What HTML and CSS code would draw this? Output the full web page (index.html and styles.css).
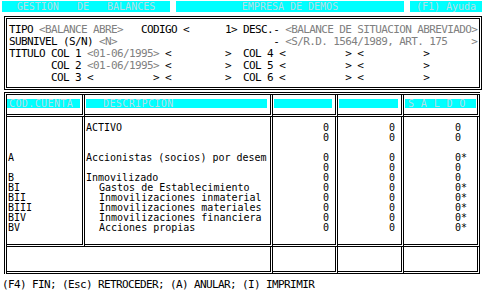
FILE: index.html
```
<!DOCTYPE html>
<html lang="es">
<head>
    <meta charset="UTF-8">
    <title>Gestion de Balances</title>
    <link rel="stylesheet" href="styles.css">
</head>
<body>
    <div class="topbar">
        <div class="tab tab-app">GESTION   DE   BALANCES</div>
        <div class="tab tab-emp">EMPRESA DE DEMOS</div>
        <div class="tab tab-help">(F1) Ayuda</div>
    </div>

    <div class="panel">
        <div class="line">TIPO <span class="fld">&lt;BALANCE ABRE&gt;</span>   CODIGO &lt;      1&gt; DESC.- <span class="fld">&lt;BALANCE DE SITUACION ABREVIADO&gt;</span></div>
        <div class="line">SUBNIVEL (S/N) <span class="fld">&lt;N&gt;</span>                          - <span class="fld">&lt;S/R.D. 1564/1989, ART. 175    &gt;</span></div>
        <div class="line">TITULO COL 1 <span class="fld">&lt;01-06/1995&gt;</span> &lt;         &gt;  COL 4 &lt;          &gt; &lt;          &gt;</div>
        <div class="line">       COL 2 <span class="fld">&lt;01-06/1995&gt;</span> &lt;         &gt;  COL 5 &lt;          &gt; &lt;          &gt;</div>
        <div class="line">       COL 3 &lt;          &gt; &lt;         &gt;  COL 6 &lt;          &gt; &lt;          &gt;</div>
    </div>

    <div class="grid">
        <div class="head"><div class="bar bar-cod">COD.CUENTA</div></div>
        <div class="head"><div class="bar bar-desc">DESCRIPCION</div></div>
        <div class="head"><div class="bar"></div></div>
        <div class="head"><div class="bar"></div></div>
        <div class="head"><div class="bar bar-saldo">S A L D O</div></div>

        <div class="body cod">
            <div class="row"></div>
            <div class="row"></div>
            <div class="row"></div>
            <div class="row">A</div>
            <div class="row"></div>
            <div class="row">B</div>
            <div class="row">BI</div>
            <div class="row">BII</div>
            <div class="row">BIII</div>
            <div class="row">BIV</div>
            <div class="row">BV</div>
        </div>
        <div class="body desc">
            <div class="row">ACTIVO</div>
            <div class="row"></div>
            <div class="row"></div>
            <div class="row">Accionistas (socios) por desem</div>
            <div class="row"></div>
            <div class="row">Inmovilizado</div>
            <div class="row sub">Gastos de Establecimiento</div>
            <div class="row sub">Inmovilizaciones inmaterial</div>
            <div class="row sub">Inmovilizaciones materiales</div>
            <div class="row sub">Inmovilizaciones financiera</div>
            <div class="row sub">Acciones propias</div>
        </div>
        <div class="body num">
            <div class="row">0</div>
            <div class="row">0</div>
            <div class="row"></div>
            <div class="row">0</div>
            <div class="row">0</div>
            <div class="row">0</div>
            <div class="row">0</div>
            <div class="row">0</div>
            <div class="row">0</div>
            <div class="row">0</div>
            <div class="row">0</div>
        </div>
        <div class="body num">
            <div class="row">0</div>
            <div class="row">0</div>
            <div class="row"></div>
            <div class="row">0</div>
            <div class="row">0</div>
            <div class="row">0</div>
            <div class="row">0</div>
            <div class="row">0</div>
            <div class="row">0</div>
            <div class="row">0</div>
            <div class="row">0</div>
        </div>
        <div class="body num saldo">
            <div class="row">0 </div>
            <div class="row">0 </div>
            <div class="row"></div>
            <div class="row">0*</div>
            <div class="row">0 </div>
            <div class="row">0 </div>
            <div class="row">0*</div>
            <div class="row">0*</div>
            <div class="row">0*</div>
            <div class="row">0*</div>
            <div class="row">0*</div>
        </div>

        <div class="total total-label"></div>
        <div class="total"></div>
        <div class="total"></div>
        <div class="total"></div>
    </div>

    <div class="keys">(F4) FIN; (Esc) RETROCEDER; (A) ANULAR; (I) IMPRIMIR</div>
</body>
</html>
```

FILE: styles.css
```
body {
    margin: 0;
    width: 499px;
    height: 299px;
    background: #fff;
    color: #000;
    font-family: 'DejaVu Sans Mono', 'Liberation Mono', monospace;
    font-size: 11px;
    letter-spacing: -0.62px;
    overflow: hidden;
}

.topbar {
    display: flex;
    gap: 6px;
    margin: 1px 0 0 2px;
}

.tab {
    height: 11px;
    line-height: 11px;
    background: #00ffff;
    color: #b8dce4;
    font-size: 10px;
    letter-spacing: 0;
    text-align: center;
    white-space: pre;
}

.tab-app { width: 168px; }
.tab-emp { width: 228px; }
.tab-help { width: 72px; }

.panel {
    width: 470px;
    margin: 4px 0 0 4px;
    border: 3px double #000;
    padding: 5px 0 3px 2px;
}

.line {
    height: 12px;
    line-height: 12px;
    white-space: pre;
}

.fld {
    color: #808080;
}

.grid {
    display: grid;
    grid-template-columns: 78px 188px 65px 66px 76px;
    width: 473px;
    margin: 2px 0 0 4px;
    border-left: 3px double #000;
    border-top: 3px double #000;
}

.head,
.body,
.total {
    border-right: 3px double #000;
    border-bottom: 3px double #000;
}

.head {
    height: 19px;
}

.bar {
    height: 9px;
    margin: 4px 3px 0 1px;
    background: #00ffff;
    color: #b8dce4;
    font-size: 10px;
    letter-spacing: 0.4px;
    line-height: 9px;
    white-space: pre;
}

.bar-cod {
    margin: 4px 2px 0 0;
    padding-left: 2px;
}

.bar-desc { padding-left: 17px; }

.bar-saldo {
    margin-right: 1px;
    padding-left: 3px;
}

.body {
    height: 121px;
    padding-top: 6px;
    font-size: 10px;
    letter-spacing: 0;
}

.row {
    height: 10px;
    line-height: 10px;
    white-space: pre;
}

.cod .row,
.desc .row { padding-left: 1px; }

.desc .sub { padding-left: 14px; }

.num .row {
    text-align: right;
    padding-right: 6px;
}

.saldo .row { padding-right: 10px; }

.total {
    height: 24px;
}

.total-label {
    grid-column: span 2;
}

.keys {
    margin: 5px 0 0 2px;
    line-height: 12px;
    white-space: pre;
}
```
